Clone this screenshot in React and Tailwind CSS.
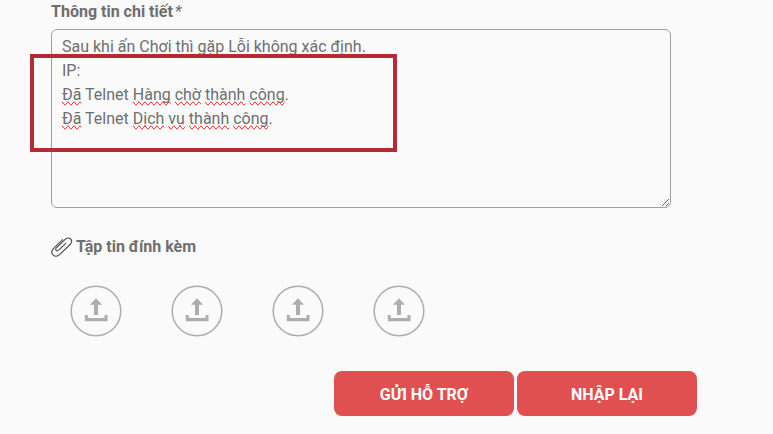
import React, { useState } from "react";

const INITIAL_DETAIL = [
  "Sau khi ấn Chơi thì gặp Lỗi không xác định.",
  "IP:",
  "Đã Telnet Hàng chờ thành công.",
  "Đã Telnet Dịch vụ thành công.",
].join("\n");

const MISSPELLED = ["Đã", "Hàng", "chờ", "thành", "công", "Dịch", "vụ"];

const UPLOAD_SLOTS = [1, 2, 3, 4];

function PaperclipIcon() {
  return (
    <svg
      width="22"
      height="22"
      viewBox="0 0 22 22"
      fill="none"
      stroke="#4a4a4a"
      strokeWidth="1.1"
      strokeLinecap="round"
      strokeLinejoin="round"
      aria-hidden="true"
    >
      <path d="M14.8 7.4 7.6 14.2C5.6 15.9 3.7 13.7 5.4 11.9L13.6 3.8C17.6-.2 23 3.6 19.6 8L8.6 18.6C4.2 22.6-1.6 17.8 1.9 13.2L11.6 3.6" />
    </svg>
  );
}

function UploadIcon() {
  return (
    <svg width="52" height="52" viewBox="0 0 52 52" aria-hidden="true">
      <circle cx="26" cy="26" r="24.8" fill="none" stroke="#adadad" strokeWidth="1.5" />
      <path
        fill="#adadad"
        d="M26 13.3 32 19.8H28V30H24V19.8H20ZM14.8 30H17.8V33H34.5V30H37.5V36.3H14.8Z"
      />
    </svg>
  );
}

// Same text as the textarea, drawn transparent under it to carry the spelling marks
function SpellingMarks({ text }) {
  return (
    <div
      aria-hidden="true"
      className="pointer-events-none absolute inset-0 overflow-hidden whitespace-pre-wrap border border-transparent px-2.5 pb-1 pt-[5px] leading-6 text-transparent"
    >
      {text.split(/([\s.:]+)/).map((part, i) =>
        MISSPELLED.includes(part) ? (
          <span key={i} className="[text-decoration-line:spelling-error]">
            {part}
          </span>
        ) : (
          part
        )
      )}
    </div>
  );
}

export default function App() {
  const [detail, setDetail] = useState(INITIAL_DETAIL);

  return (
    <div className="min-h-screen bg-[#fafafa] pl-[51px] font-['Roboto',sans-serif] text-base text-[#6e6e6e]">
      <form className="w-full max-w-[646px]" onSubmit={(e) => e.preventDefault()}>
        <label htmlFor="detail" className="block pb-[5px] font-bold leading-6">
          Thông tin chi tiết<span className="pl-0.5 font-normal italic">*</span>
        </label>

        <div className="relative mr-[26px]">
          <SpellingMarks text={detail} />
          <textarea
            id="detail"
            rows={7}
            spellCheck={false}
            value={detail}
            onChange={(e) => setDetail(e.target.value)}
            className="relative block w-full resize rounded-md border border-[#a0a0a0] bg-transparent px-2.5 pb-1 pt-[5px] leading-6 outline-none"
          />
          <div className="pointer-events-none absolute -left-[21px] top-[25px] h-[98px] w-[367px] border-4 border-[#b62a33]" />
        </div>

        <div className="mt-[27px] flex items-center gap-[3px]">
          <PaperclipIcon />
          <span className="font-bold leading-6">Tập tin đính kèm</span>
        </div>

        <div className="mt-[26px] flex gap-[49px] pl-[19px]">
          {UPLOAD_SLOTS.map((n) => (
            <button key={n} type="button" aria-label={`Tập tin ${n}`} className="cursor-pointer">
              <UploadIcon />
            </button>
          ))}
        </div>

        <div className="mt-[34px] flex justify-end gap-[3px]">
          <button
            type="submit"
            className="h-[45px] w-[180px] cursor-pointer rounded-lg bg-[#e15050] pt-0.5 font-bold text-white"
          >
            GỬI HỖ TRỢ
          </button>
          <button
            type="button"
            onClick={() => setDetail("")}
            className="h-[45px] w-[180px] cursor-pointer rounded-lg bg-[#e15050] pt-0.5 font-bold text-white"
          >
            NHẬP LẠI
          </button>
        </div>
      </form>
    </div>
  );
}
